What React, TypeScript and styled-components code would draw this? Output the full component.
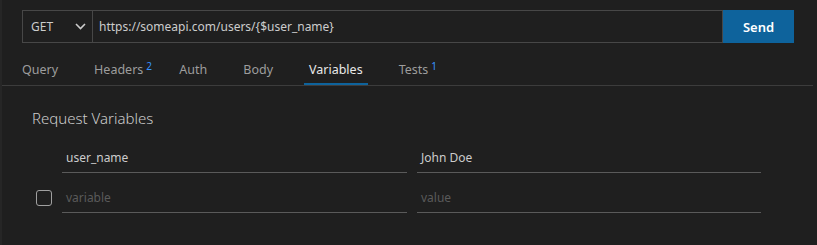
import React from 'react';
import styled, { createGlobalStyle } from 'styled-components';

const GlobalStyle = createGlobalStyle`
  html, body {
    margin: 0;
    padding: 0;
    background: #1f1f1f;
  }
  body {
    font-family: "Segoe UI", "Noto Sans", "Liberation Sans", sans-serif;
    font-size: 12px;
    color: #cccccc;
  }
`;

const Page = styled.div`
  width: 817px;
  height: 245px;
  box-sizing: border-box;
  border-left: 2px solid #262626;
  padding-top: 10px;
  overflow: hidden;
`;

const UrlBar = styled.div`
  display: flex;
  height: 33px;
  margin: 0 23px 0 20px;
  box-sizing: border-box;
`;

const MethodSelect = styled.div`
  display: flex;
  align-items: center;
  justify-content: space-between;
  width: 71px;
  box-sizing: border-box;
  border: 1px solid #474747;
  padding: 0 6px 0 8px;
  color: #cccccc;
`;

const UrlInput = styled.div`
  flex: 1;
  display: flex;
  align-items: center;
  border: 1px solid #474747;
  border-left: none;
  padding-left: 6px;
  color: #cccccc;
  white-space: nowrap;
`;

const SendButton = styled.button`
  width: 71px;
  border: none;
  background: #0e639c;
  color: #ffffff;
  font-family: inherit;
  font-size: 13px;
  font-weight: 600;
  padding: 0;
`;

const TabBar = styled.div`
  display: flex;
  gap: 26px;
  margin: 10px 4px 0 0;
  padding-left: 15px;
  border-bottom: 1px solid #3c3c3c;
`;

const Tab = styled.div<{ $active?: boolean }>`
  position: relative;
  height: 32px;
  box-sizing: border-box;
  display: flex;
  align-items: center;
  padding: 2px 5px 0;
  font-size: 12.5px;
  border-bottom: 2px solid ${(p) => (p.$active ? '#0e639c' : 'transparent')};
  color: ${(p) => (p.$active ? '#e8e8e8' : '#9d9d9d')};
`;

const Count = styled.sup`
  position: absolute;
  left: 100%;
  top: 8px;
  margin-left: -2px;
  font-size: 10px;
  line-height: 10px;
  color: #3794ff;
`;

const Section = styled.div`
  padding: 21px 0 0 30px;
`;

const Title = styled.div`
  font-size: 15px;
  font-weight: 300;
  line-height: 22px;
  color: #cccccc;
`;

const Grid = styled.div`
  display: grid;
  grid-template-columns: 16px 345px 344px;
  column-gap: 10px;
  row-gap: 10px;
  margin: 14px 0 0 4px;
  align-items: center;
`;

const Field = styled.div<{ $placeholder?: boolean }>`
  height: 30px;
  box-sizing: border-box;
  display: flex;
  align-items: center;
  padding: 0 4px;
  border-bottom: 1px solid #5a5a5a;
  color: ${(p) => (p.$placeholder ? '#5a5a5a' : '#cccccc')};
`;

const Checkbox = styled.div<{ $hidden?: boolean }>`
  width: 16px;
  height: 16px;
  box-sizing: border-box;
  border: 1px solid #a0a0a0;
  border-radius: 3px;
  visibility: ${(p) => (p.$hidden ? 'hidden' : 'visible')};
`;

const Chevron = () => (
  <svg width="11" height="7" viewBox="0 0 11 7" fill="none">
    <path d="M1 1l4.5 4.5L10 1" stroke="#cccccc" strokeWidth="1.6" />
  </svg>
);

const tabs = [
  { label: 'Query' },
  { label: 'Headers', count: 2 },
  { label: 'Auth' },
  { label: 'Body' },
  { label: 'Variables', active: true },
  { label: 'Tests', count: 1 },
];

const rows = [
  { name: 'user_name', value: 'John Doe', saved: true },
  { name: '', value: '', saved: false },
];

export default function App() {
  return (
    <Page>
      <GlobalStyle />
      <UrlBar>
        <MethodSelect>
          GET
          <Chevron />
        </MethodSelect>
        <UrlInput>https://someapi.com/users/{'{$user_name}'}</UrlInput>
        <SendButton>Send</SendButton>
      </UrlBar>
      <TabBar>
        {tabs.map((t) => (
          <Tab key={t.label} $active={t.active}>
            {t.label}
            {t.count !== undefined && <Count>{t.count}</Count>}
          </Tab>
        ))}
      </TabBar>
      <Section>
        <Title>Request Variables</Title>
        <Grid>
          {rows.map((r, i) => (
            <React.Fragment key={i}>
              <Checkbox $hidden={r.saved} />
              <Field $placeholder={!r.name}>{r.name || 'variable'}</Field>
              <Field $placeholder={!r.value}>{r.value || 'value'}</Field>
            </React.Fragment>
          ))}
        </Grid>
      </Section>
    </Page>
  );
}
